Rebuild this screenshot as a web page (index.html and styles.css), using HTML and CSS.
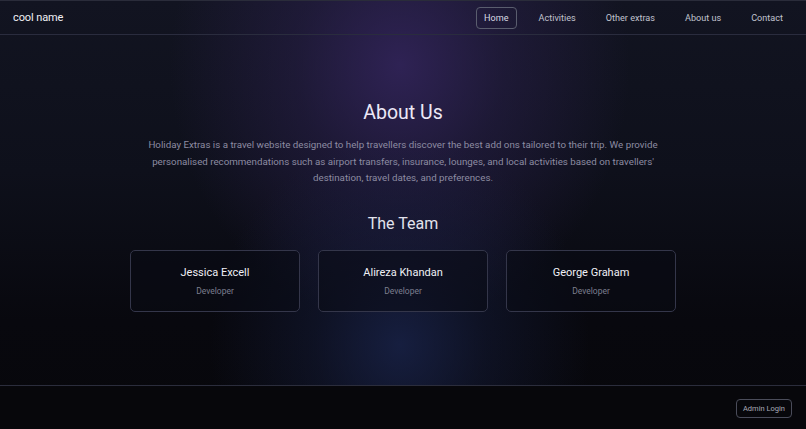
FILE: index.html
```html
<!DOCTYPE html>
<html lang="en">
<head>
<meta charset="utf-8">
<title>cool name</title>
<link rel="stylesheet" href="styles.css">
</head>
<body>
<div class="page">
  <header class="navbar">
    <div class="brand">cool name</div>
    <nav class="nav">
      <a class="nav-link active" href="#">Home</a>
      <a class="nav-link" href="#">Activities</a>
      <a class="nav-link" href="#">Other extras</a>
      <a class="nav-link" href="#">About us</a>
      <a class="nav-link" href="#">Contact</a>
    </nav>
  </header>
  <main class="main">
    <h1 class="title">About Us</h1>
    <p class="intro">Holiday Extras is a travel website designed to help travellers discover the best add ons tailored to their trip. We provide personalised recommendations such as airport transfers, insurance, lounges, and local activities based on travellers' destination, travel dates, and preferences.</p>
    <h2 class="subtitle">The Team</h2>
    <div class="team">
      <div class="card"><div class="name">Jessica Excell</div><div class="role">Developer</div></div>
      <div class="card"><div class="name">Alireza Khandan</div><div class="role">Developer</div></div>
      <div class="card"><div class="name">George Graham</div><div class="role">Developer</div></div>
    </div>
  </main>
  <footer class="footer">
    <button class="admin">Admin Login</button>
  </footer>
</div>
</body>
</html>
```
FILE: styles.css
```css
* { box-sizing: border-box; }
html, body { margin: 0; padding: 0; height: 100%; }
body {
  font-family: Roboto, "Liberation Sans", sans-serif;
  background: #07070b;
  color: #e6e6f0;
}
.page {
  height: 429px;
  display: flex;
  flex-direction: column;
  background:
    radial-gradient(ellipse 190px 210px at 400px 345px, rgba(26,36,76,0.8), rgba(26,36,76,0.35) 45%, rgba(26,36,76,0) 100%),
    radial-gradient(ellipse 230px 260px at 400px 65px, rgba(50,36,90,0.9), rgba(50,36,90,0.4) 45%, rgba(50,36,90,0) 100%),
    linear-gradient(180deg, #121421 0%, #0e101b 40%, #08080e 75%, #07070b 100%);
}
.navbar {
  height: 35px;
  flex: none;
  display: flex;
  align-items: center;
  justify-content: space-between;
  padding: 0 15px 0 13px;
  border-top: 1px solid #2a2c3a;
  border-bottom: 1px solid #2a2c3e;
}
.brand { font-size: 11px; color: #f0f0f5; letter-spacing: -0.1px; }
.nav { display: flex; align-items: center; gap: 14px; }
.nav-link {
  font-size: 9.1px;
  color: #c0c2ce;
  text-decoration: none;
  padding: 5px 7px;
  border: 1px solid transparent;
  border-radius: 4px;
}
.nav-link.active { border-color: #5a5d6e; color: #d8d9e2; }
.main {
  flex: 1;
  display: flex;
  flex-direction: column;
  align-items: center;
  padding-top: 66px;
  border-bottom: 1px solid #2b2d3c;
}
.title { margin: 0; font-size: 19.5px; font-weight: 400; color: #ece8f6; line-height: 24px; }
.intro {
  margin: 12px 0 0;
  width: 530px;
  text-align: center;
  font-size: 9.75px;
  line-height: 16.5px;
  color: #8d8ca2;
}
.subtitle { margin: 27px 0 0; font-size: 16px; font-weight: 400; color: #e2e2ec; line-height: 20px; }
.team { display: flex; gap: 18px; margin-top: 16px; }
.card {
  width: 170px;
  height: 62px;
  border: 1px solid #34364a;
  border-radius: 5px;
  background: rgba(10,11,20,0.55);
  display: flex;
  flex-direction: column;
  align-items: center;
  padding-top: 14px;
}
.name { font-size: 11px; color: #f0f0f6; line-height: 16px; }
.role { font-size: 8.5px; color: #7c7e8e; margin-top: 5px; }
.footer {
  height: 43px;
  flex: none;
  display: flex;
  align-items: center;
  justify-content: flex-end;
  padding: 0 14px 0 0;
  background: #07070b;
}
.admin {
  font-family: inherit;
  font-size: 7.5px;
  color: #a9aab6;
  background: transparent;
  border: 1px solid #4a4c5a;
  border-radius: 4px;
  padding: 4px 6px;
  margin-top: 2px;
}
```
